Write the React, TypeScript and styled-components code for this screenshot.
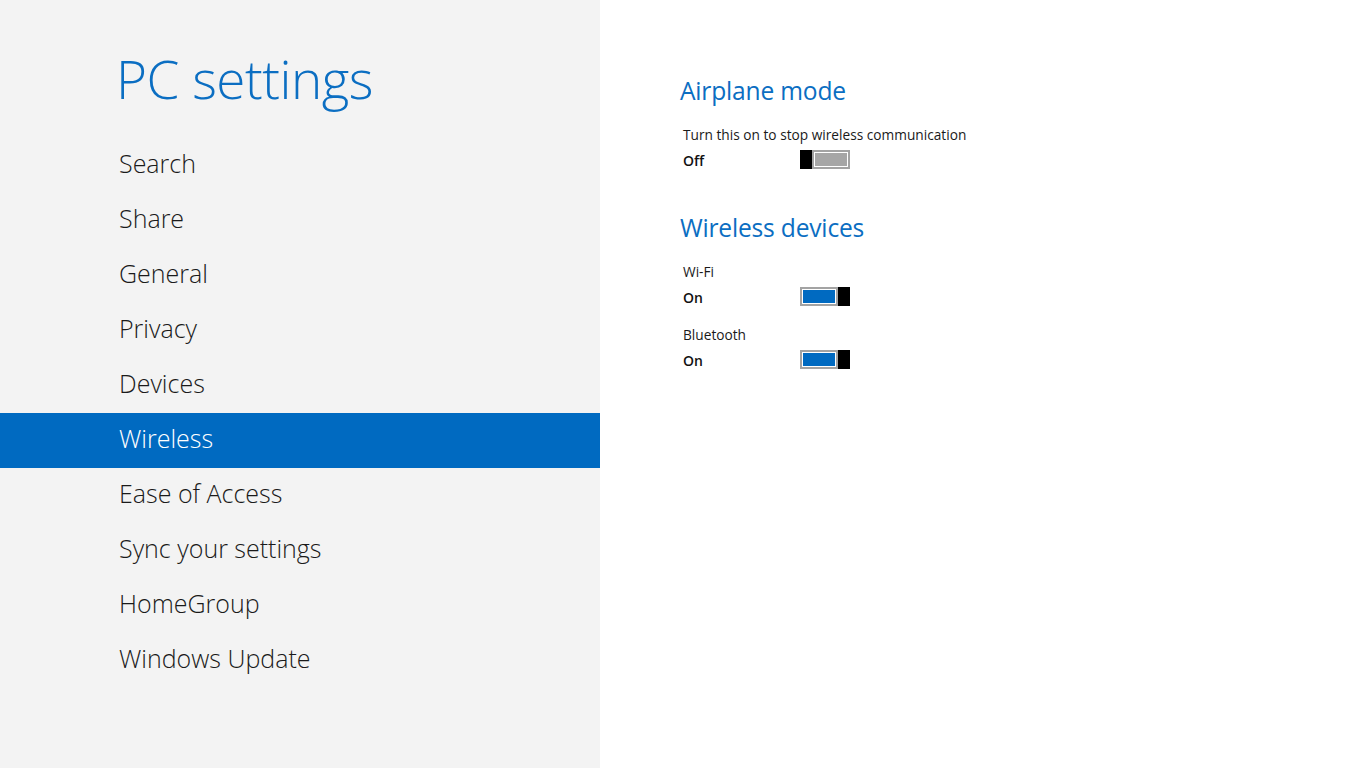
import React from "react";
import styled, { createGlobalStyle } from "styled-components";

const Global = createGlobalStyle`
  html, body { margin: 0; padding: 0; background: #ffffff; }
  body { font-family: "Open Sans", "Noto Sans", sans-serif; }
`;

const Page = styled.div`
  display: flex;
  width: 1366px;
  height: 768px;
  overflow: hidden;
`;

const Sidebar = styled.nav`
  width: 600px;
  flex: none;
  background: #f3f3f3;
  display: flex;
  flex-direction: column;
`;

const Title = styled.h1`
  margin: 0;
  padding: 44px 0 0 116px;
  height: 94px;
  box-sizing: border-box;
  font-family: "Open Sans", sans-serif;
  font-weight: 300;
  font-size: 53px;
  line-height: 70px;
  color: #0b6ec2;
  letter-spacing: -0.5px;
`;

const Menu = styled.ul`
  list-style: none;
  margin: 0;
  padding: 0;
  margin-top: 44px;
`;

const Item = styled.li<{ $active?: boolean }>`
  height: 55px;
  box-sizing: border-box;
  padding-bottom: 6px;
  display: flex;
  align-items: center;
  padding-left: 119px;
  font-family: "Open Sans", sans-serif;
  font-weight: 300;
  font-size: 25px;
  color: ${(p) => (p.$active ? "#ffffff" : "#1a1a1a")};
  background: ${(p) => (p.$active ? "#006ac1" : "transparent")};
`;

const Content = styled.main`
  flex: 1;
  background: #ffffff;
  padding: 73px 0 0 80px;
  box-sizing: border-box;
`;

const Section = styled.section`
  margin-bottom: 36px;
`;

const Heading = styled.h2`
  margin: 0 0 15px 0;
  font-family: "Open Sans", sans-serif;
  font-weight: 400;
  font-size: 24.6px;
  line-height: 36px;
  color: #0b6ec2;
  letter-spacing: -0.2px;
`;

const Setting = styled.div`
  padding-left: 3px;
  margin-bottom: 13px;
`;

const Label = styled.div`
  font-family: "Open Sans", sans-serif;
  font-size: 13.7px;
  line-height: 22px;
  color: #1a1a1a;
`;

const StateRow = styled.div`
  display: flex;
  align-items: center;
  height: 28px;
`;

const StateText = styled.span`
  width: 117px;
  font-family: "Open Sans", sans-serif;
  font-weight: 600;
  font-size: 14px;
  color: #111111;
`;

const Switch = styled.div<{ $on: boolean }>`
  display: flex;
  flex-direction: ${(p) => (p.$on ? "row" : "row-reverse")};
  justify-content: flex-end;
  width: 50px;
  height: 19px;
  margin-top: -1px;
`;

const Track = styled.div<{ $on: boolean }>`
  width: 38px;
  height: 19px;
  box-sizing: border-box;
  border: 2px solid #a3a3a3;
  padding: 1px;
  background: #ffffff;
  display: flex;
  &::before {
    content: "";
    flex: 1;
    background: ${(p) => (p.$on ? "#006ac1" : "#a6a6a6")};
  }
`;

const Thumb = styled.div`
  width: 12px;
  height: 19px;
  background: #000000;
`;

const Toggle = ({ on }: { on: boolean }) => (
  <Switch $on={on}>
    <Track $on={on} />
    <Thumb />
  </Switch>
);

const items = [
  "Search",
  "Share",
  "General",
  "Privacy",
  "Devices",
  "Wireless",
  "Ease of Access",
  "Sync your settings",
  "HomeGroup",
  "Windows Update",
];

export default function App() {
  return (
    <>
      <Global />
      <Page>
        <Sidebar>
          <Title>PC settings</Title>
          <Menu>
            {items.map((it) => (
              <Item key={it} $active={it === "Wireless"}>
                {it}
              </Item>
            ))}
          </Menu>
        </Sidebar>
        <Content>
          <Section>
            <Heading>Airplane mode</Heading>
            <Setting>
              <Label>Turn this on to stop wireless communication</Label>
              <StateRow>
                <StateText>Off</StateText>
                <Toggle on={false} />
              </StateRow>
            </Setting>
          </Section>
          <Section>
            <Heading>Wireless devices</Heading>
            <Setting>
              <Label>Wi-Fi</Label>
              <StateRow>
                <StateText>On</StateText>
                <Toggle on={true} />
              </StateRow>
            </Setting>
            <Setting>
              <Label>Bluetooth</Label>
              <StateRow>
                <StateText>On</StateText>
                <Toggle on={true} />
              </StateRow>
            </Setting>
          </Section>
        </Content>
      </Page>
    </>
  );
}
